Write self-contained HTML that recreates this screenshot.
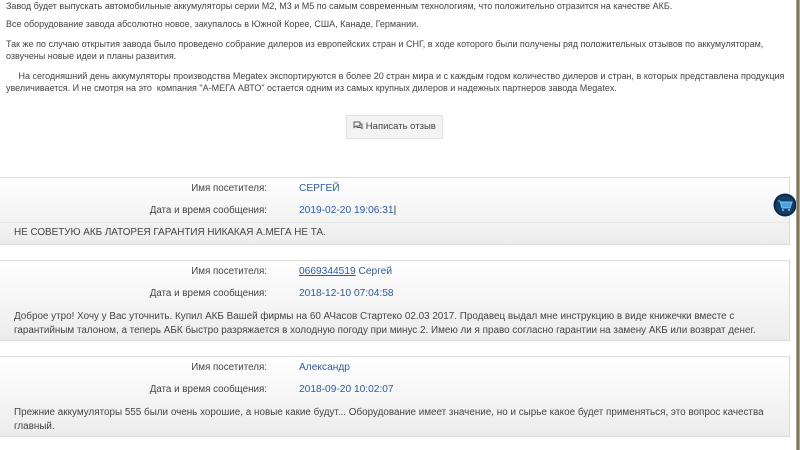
<!DOCTYPE html>
<html><head><meta charset="utf-8"><style>
body{margin:0;width:800px;height:450px;overflow:hidden;background:#fff;font-family:"Liberation Sans",Arial,sans-serif;color:#444;position:relative}
.p{position:absolute;left:6px;font-size:9px;line-height:12px;white-space:nowrap;color:#444}
.btn{position:absolute;left:346px;top:115px;width:95px;height:22px;background:#f3f3f3;border:1px solid #e2e2e2;font-size:9.5px;line-height:22px;text-align:center;color:#444}
.card{position:absolute;left:0;width:789px;border:1px solid #ddd;border-left:none;background:linear-gradient(#fff,#ececec);font-size:9.9px;color:#444}
.lab{position:absolute;right:522px;white-space:nowrap;font-size:9.8px}
.val{position:absolute;left:299px;white-space:nowrap;color:#2a5caa;font-size:10.2px}
.txt{position:absolute;left:14px;width:772px;line-height:14px}
.sep{position:absolute;left:0;right:0;height:1px;background:#e6e6e6}
.edge{position:absolute;left:796px;top:0;width:4px;height:450px;background:linear-gradient(90deg,#bbb,#6b5d3e,#cbbf99)}
</style></head><body>
<div class="p" style="top:0">Завод будет выпускать автомобильные аккумуляторы серии M2, M3 и M5 по самым современным технологиям, что положительно отразится на качестве АКБ.</div>
<div class="p" style="top:18px">Все оборудование завода абсолютно новое, закупалось в Южной Корее, США, Канаде, Германии.</div>
<div class="p" style="top:38px">Так же по случаю открытия завода было проведено собрание дилеров из европейских стран и СНГ, в ходе которого были получены ряд положительных отзывов по аккумуляторам,</div>
<div class="p" style="top:50px">озвучены новые идеи и планы развития.</div>
<div class="p" style="top:70px">&nbsp;&nbsp;&nbsp;&nbsp;&nbsp;На сегодняшний день аккумуляторы производства Megatex экспортируются в более 20 стран мира и с каждым годом количество дилеров и стран, в которых представлена продукция</div>
<div class="p" style="top:82px">увеличивается. И не смотря на это&nbsp; компания "А-МЕГА АВТО" остается одним из самых крупных дилеров и надежных партнеров завода Megatex.</div>
<div class="btn"><svg width="10" height="9" viewBox="0 0 10 9" style="vertical-align:-1px"><path d="M1 1h6v4H3L1 6.5z M7 3h2v4.5L7.5 6.5H4V5" fill="none" stroke="#555" stroke-width="1"/></svg> Написать отзыв</div>

<div class="card" style="top:177px;height:66px">
<div class="lab" style="top:5px">Имя посетителя:</div><div class="val" style="top:5px">СЕРГЕЙ</div>
<div class="lab" style="top:27px">Дата и время сообщения:</div><div class="val" style="top:27px">2019-02-20 19:06:31<span style="color:#333">|</span></div>
<div class="sep" style="top:44px"></div>
<div class="txt" style="top:48px">НЕ СОВЕТУЮ АКБ ЛАТОРЕЯ ГАРАНТИЯ НИКАКАЯ А.МЕГА НЕ ТА.</div>
</div>

<div class="card" style="top:260px;height:79px">
<div class="lab" style="top:5px">Имя посетителя:</div><div class="val" style="top:5px"><u>0669344519</u> Сергей</div>
<div class="lab" style="top:27px">Дата и время сообщения:</div><div class="val" style="top:27px">2018-12-10 07:04:58</div>
<div class="txt" style="top:49px">Доброе утро! Хочу у Вас уточнить. Купил АКБ Вашей фирмы на 60 АЧасов Стартеко 02.03 2017. Продавец выдал мне инструкцию в виде книжечки вместе с гарантийным талоном, а теперь АБК быстро разряжается в холодную погоду при минус 2. Имею ли я право согласно гарантии на замену АКБ или возврат денег.</div>
</div>

<div class="card" style="top:356px;height:79px">
<div class="lab" style="top:5px">Имя посетителя:</div><div class="val" style="top:5px">Александр</div>
<div class="lab" style="top:27px">Дата и время сообщения:</div><div class="val" style="top:27px">2018-09-20 10:02:07</div>
<div class="txt" style="top:49px">Прежние аккумуляторы 555 были очень хорошие, а новые какие будут... Оборудование имеет значение, но и сырье какое будет применяться, это вопрос качества главный.</div>
</div>

<svg style="position:absolute;left:773px;top:193px" width="24" height="24" viewBox="0 0 24 24"><circle cx="12" cy="12" r="11.5" fill="#0c2a4a"/><circle cx="12" cy="12" r="9.5" fill="#143e68"/><path d="M5 8h2l2 7h8l2-6H8" fill="#4aa3e0" stroke="#7cc4f4" stroke-width="1"/><circle cx="10" cy="17" r="1" fill="#7cc4f4"/><circle cx="16" cy="17" r="1" fill="#7cc4f4"/></svg>
<div class="edge"></div>
</body></html>
